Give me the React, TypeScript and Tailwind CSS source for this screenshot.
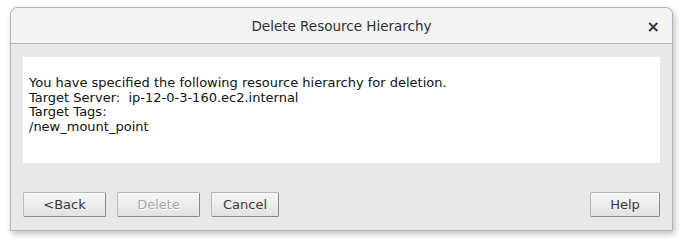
import React from 'react';

const Button: React.FC<{ label: string; width: string; disabled?: boolean }> = ({ label, width, disabled }) => (
  <button
    className={`${width} h-[25px] rounded-[2px] border border-[#b8b8b8] border-r-[#8a8a8a] border-b-[#8a8a8a] bg-gradient-to-b from-[#f6f6f6] to-[#e2e2e2] text-[13px] ${
      disabled ? 'text-[#a8a8a8] [text-shadow:1px_1px_0_#ffffff]' : 'text-[#3a3a3a]'
    }`}
  >
    {label}
  </button>
);

const App: React.FC = () => {
  return (
    <div className="w-[688px] h-[242px] bg-white pl-[10px] pt-[7px] font-['DejaVu_Sans',sans-serif]">
      <div className="w-[663px] h-[224px] flex flex-col rounded-t-[7px] border border-[#b4b4b4] bg-[#e8e8e8] shadow-[2px_3px_6px_rgba(0,0,0,0.25)]">
        {/* barra de titulo */}
        <div className="h-[36px] flex items-center justify-center relative rounded-t-[7px] bg-[#f3f3f3] border-b border-[#b9b9b9]">
          <span className="text-[13.5px] text-[#2e3436] pt-[1px]">Delete Resource Hierarchy</span>
          <span className="absolute right-[12px] top-[7px] text-[16px] font-bold text-[#2e3436]">×</span>
        </div>

        {/* contenido */}
        <div className="flex-1 flex flex-col px-[12px] pt-[13px]">
          <div className="h-[106px] bg-white pl-[6px] pt-[19px] text-[13px] leading-[14.5px] text-[#111111]">
            <div>You have specified the following resource hierarchy for deletion.</div>
            <div>Target Server:&nbsp; ip-12-0-3-160.ec2.internal</div>
            <div>Target Tags:</div>
            <div>/new_mount_point</div>
          </div>

          <div className="flex items-center mt-[29px]">
            <div className="flex gap-[11px]">
              <Button label="<Back" width="w-[83px]" />
              <Button label="Delete" width="w-[83px]" disabled />
              <Button label="Cancel" width="w-[68px]" />
            </div>
            <div className="ml-auto">
              <Button label="Help" width="w-[70px]" />
            </div>
          </div>
        </div>
      </div>
    </div>
  );
};

export default App;
